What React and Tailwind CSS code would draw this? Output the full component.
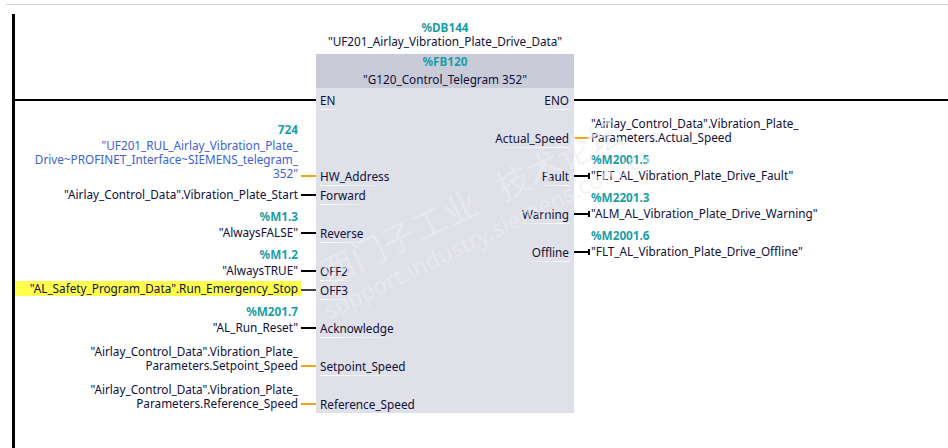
const teal = 'font-bold text-[#1a9ea6]';

// h = px from the previous row's bottom to this pin's row bottom
const leftPins = [
  { name: 'HW_Address', h: 84, wire: 'orange', lift: 'mb-[5px]', value: ['"UF201_RUL_Airlay_Vibration_Plate_', 'Drive~PROFINET_Interface~SIEMENS_telegram_', '352"'], address: '724', blue: true },
  { name: 'Forward', h: 19, wire: 'black', value: ['"Airlay_Control_Data".Vibration_Plate_Start'] },
  { name: 'Reverse', h: 38, wire: 'black', value: ['"AlwaysFALSE"'], address: '%M1.3' },
  { name: 'OFF2', h: 38, wire: 'black', value: ['"AlwaysTRUE"'], address: '%M1.2' },
  { name: 'OFF3', h: 19, wire: 'gray', value: ['"AL_Safety_Program_Data".Run_Emergency_Stop'], highlight: true },
  { name: 'Acknowledge', h: 38, wire: 'black', value: ['"AL_Run_Reset"'], address: '%M201.7' },
  { name: 'Setpoint_Speed', h: 38, wire: 'orange', value: ['"Airlay_Control_Data".Vibration_Plate_', 'Parameters.Setpoint_Speed'] },
  { name: 'Reference_Speed', h: 38, wire: 'orange', value: ['"Airlay_Control_Data".Vibration_Plate_', 'Parameters.Reference_Speed'] },
];

const rightPins = [
  { name: 'Actual_Speed', h: 46, wire: 'orange', value: ['"Airlay_Control_Data".Vibration_Plate_', 'Parameters.Actual_Speed'] },
  { name: 'Fault', h: 38, wire: 'black', value: ['"FLT_AL_Vibration_Plate_Drive_Fault"'], address: '%M2001.5' },
  { name: 'Warning', h: 38, wire: 'black', value: ['"ALM_AL_Vibration_Plate_Drive_Warning"'], address: '%M2201.3' },
  { name: 'Offline', h: 38, wire: 'black', value: ['"FLT_AL_Vibration_Plate_Drive_Offline"'], address: '%M2001.6' },
];

const wireColor = {
  orange: 'bg-[#f5a31a]',
  black: 'bg-black',
  gray: 'bg-[#444444]',
};

function PinLabel({ name, right }) {
  return (
    <div className={`flex h-[19px] ${right ? 'justify-end' : ''}`}>
      <div className="flex flex-col">
        <span className="leading-[18px]">{name}</span>
        <div className={`h-[1px] ${right ? '-ml-[8px] bg-gradient-to-l' : '-mr-[8px] bg-gradient-to-r'} from-white to-transparent`} />
      </div>
    </div>
  );
}

function Operand({ pin }) {
  return (
    <>
      {pin.address && <div className={`${teal} mb-[2px]`}>{pin.address}</div>}
      {pin.value.map((line) => (
        <div key={line} className="whitespace-nowrap">{line}</div>
      ))}
    </>
  );
}

export default function App() {
  return (
    <div
      className="relative h-[448px] w-[948px] overflow-hidden bg-white text-[11.75px] leading-[14px] text-[#10103a]"
      style={{ fontFamily: '"Noto Sans", sans-serif' }}
    >
      <div className="h-[4px]" />
      <div className="ml-[6px] h-[1px] bg-[#d3d3ec]" />
      <div className="ml-[12px] mt-[9px] flex h-[434px] border-l-[3px] border-black">
        {/* left operands */}
        <div className="w-[286px] shrink-0">
          <div className="h-[85px]" />
          <div className="-mr-[17px] h-[2px] bg-black" />
          {leftPins.map((pin) => (
            <div key={pin.name} className="flex items-end justify-end" style={{ height: pin.h }}>
              <div className={`${pin.lift || 'mb-[3px]'} pr-[3px] text-right ${pin.highlight ? 'w-full bg-[#ffff4d] pb-[1px] pl-[1px]' : ''} ${pin.blue ? 'text-[#3b62d9]' : ''}`}>
                <Operand pin={pin} />
              </div>
            </div>
          ))}
        </div>

        {/* input stubs */}
        <div className="w-[15px] shrink-0">
          <div className="h-[87px]" />
          {leftPins.map((pin) => (
            <div key={pin.name} className="flex flex-col justify-end pb-[8px]" style={{ height: pin.h }}>
              <div className={`h-[2px] ${wireColor[pin.wire]}`} />
            </div>
          ))}
        </div>

        {/* function block */}
        <div className="flex w-[258px] shrink-0 flex-col">
          <div className="h-[40px] whitespace-nowrap pt-[6px] text-center">
            <div className={teal}>%DB144</div>
            <div>"UF201_Airlay_Vibration_Plate_Drive_Data"</div>
          </div>
          <div className="flex h-[359px] flex-col bg-[#dfe0e8]">
            <div className="h-[34px] bg-[#c9cbd8] text-center">
              <div className={`${teal} leading-[15px]`}>%FB120</div>
              <div className="mt-[1px] leading-[18px]">"G120_Control_Telegram 352"</div>
            </div>
            <div className="flex justify-between pl-[4px] pr-[5px] pt-[3px]">
              <div className="flex flex-col">
                <PinLabel name="EN" />
                <div className="h-[57px]" />
                <PinLabel name="HW_Address" />
                <PinLabel name="Forward" />
                <div className="h-[19px]" />
                <PinLabel name="Reverse" />
                <div className="h-[19px]" />
                <PinLabel name="OFF2" />
                <PinLabel name="OFF3" />
                <div className="h-[19px]" />
                <PinLabel name="Acknowledge" />
                <div className="h-[19px]" />
                <PinLabel name="Setpoint_Speed" />
                <div className="h-[19px]" />
                <PinLabel name="Reference_Speed" />
              </div>
              <div className="flex flex-col">
                <PinLabel name="ENO" right />
                <div className="h-[19px]" />
                <PinLabel name="Actual_Speed" right />
                <div className="h-[19px]" />
                <PinLabel name="Fault" right />
                <div className="h-[19px]" />
                <PinLabel name="Warning" right />
                <div className="h-[19px]" />
                <PinLabel name="Offline" right />
              </div>
            </div>
          </div>
        </div>

        {/* right operands */}
        <div className="min-w-0 flex-1">
          <div className="h-[85px]" />
          <div className="h-[2px] bg-black" />
          {rightPins.map((pin) => (
            <div key={pin.name} className="flex items-end" style={{ height: pin.h }}>
              <div className="relative mb-[8px] flex h-[2px] w-[16px] shrink-0 items-center">
                <div className={`h-[2px] w-[15px] ${wireColor[pin.wire]}`} />
                {pin.wire === 'black' && <div className="absolute right-0 h-[6px] w-[2px] bg-black" />}
              </div>
              <div className="mb-[3px] pl-[1px]">
                <Operand pin={pin} />
              </div>
            </div>
          ))}
        </div>
      </div>

      {/* forum watermark */}
      <div className="pointer-events-none absolute left-[477px] top-[214px] -translate-x-1/2 -translate-y-1/2 -rotate-[26deg] whitespace-nowrap text-center text-[#ededf2]/65">
        <div className="text-[34px] leading-[42px]" style={{ fontFamily: '"Noto Sans CJK SC", sans-serif' }}>
          西门子工业<span className="ml-[25px]">技术论坛</span>
        </div>
        <div className="text-[23px] leading-[28px]">support.industry.siemens.com/cs</div>
      </div>
    </div>
  );
}
